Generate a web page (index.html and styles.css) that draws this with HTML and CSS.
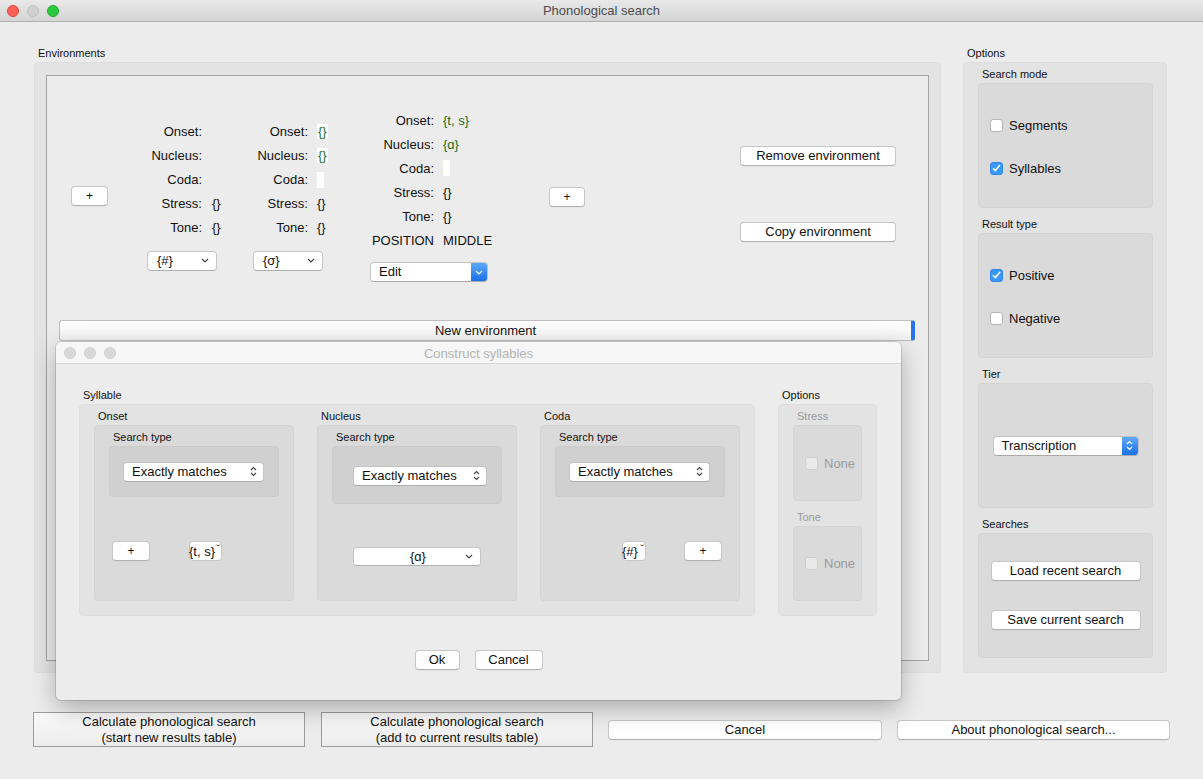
FILE: index.html
```html
<!DOCTYPE html>
<html>
<head>
<meta charset="utf-8">
<link rel="stylesheet" href="styles.css">
</head>
<body>
<div class="window">
  <div class="titlebar">
    <div class="lights">
      <span class="light red"></span><span class="light gray"></span><span class="light green"></span>
    </div>
    <div class="title">Phonological search</div>
  </div>

  <div class="main">
    <div class="envcol">
      <div class="glabel">Environments</div>
      <div class="group envgroup">
        <div class="scroll">
          <div class="envrow">
            <button class="btn plus plus1">+</button>
            <div class="col col1">
              <div class="grid g1">
                <span class="lbl">Onset:</span><span class="val"></span>
                <span class="lbl">Nucleus:</span><span class="val"></span>
                <span class="lbl">Coda:</span><span class="val"></span>
                <span class="lbl">Stress:</span><span class="val">{}</span>
                <span class="lbl">Tone:</span><span class="val">{}</span>
              </div>
              <div class="drop d70"><span>{#}</span><svg width="8" height="5" viewBox="0 0 8 5"><path d="M1 1l3 3 3-3" fill="none" stroke="#444" stroke-width="1.2"/></svg></div>
            </div>
            <div class="col col2">
              <div class="grid g1">
                <span class="lbl">Onset:</span><span class="val"><span class="wbox green">{}</span></span>
                <span class="lbl">Nucleus:</span><span class="val"><span class="wbox green">{}</span></span>
                <span class="lbl">Coda:</span><span class="val"><span class="wempty"></span></span>
                <span class="lbl">Stress:</span><span class="val">{}</span>
                <span class="lbl">Tone:</span><span class="val">{}</span>
              </div>
              <div class="drop d70"><span>{σ}</span><svg width="8" height="5" viewBox="0 0 8 5"><path d="M1 1l3 3 3-3" fill="none" stroke="#444" stroke-width="1.2"/></svg></div>
            </div>
            <div class="col col3">
              <div class="grid g3">
                <span class="lbl">Onset:</span><span class="val green">{t, s}</span>
                <span class="lbl">Nucleus:</span><span class="val green">{ɑ}</span>
                <span class="lbl">Coda:</span><span class="val"><span class="wempty"></span></span>
                <span class="lbl">Stress:</span><span class="val">{}</span>
                <span class="lbl">Tone:</span><span class="val">{}</span>
                <span class="lbl">POSITION</span><span class="val">MIDDLE</span>
              </div>
              <div class="combo-blue edit"><span class="ctext">Edit</span><span class="cblue"><svg width="8" height="5" viewBox="0 0 8 5"><path d="M1 1l3 3 3-3" fill="none" stroke="#fff" stroke-width="1.2"/></svg></span></div>
            </div>
            <button class="btn plus plus2">+</button>
            <div class="col rightbtns">
              <button class="btn wide">Remove environment</button>
              <button class="btn wide">Copy environment</button>
            </div>
          </div>
          <button class="newenv">New environment</button>
        </div>
      </div>
    </div>

    <div class="optcol">
      <div class="glabel">Options</div>
      <div class="group optgroup">
        <div class="sect">
          <div class="slabel">Search mode</div>
          <div class="sbox checks">
            <label class="chk"><span class="cb"></span>Segments</label>
            <label class="chk"><span class="cb on"><svg width="9" height="8" viewBox="0 0 9 8"><path d="M1 4.2l2.3 2.4L8 1" fill="none" stroke="#fff" stroke-width="1.5"/></svg></span>Syllables</label>
          </div>
        </div>
        <div class="sect">
          <div class="slabel">Result type</div>
          <div class="sbox checks">
            <label class="chk"><span class="cb on"><svg width="9" height="8" viewBox="0 0 9 8"><path d="M1 4.2l2.3 2.4L8 1" fill="none" stroke="#fff" stroke-width="1.5"/></svg></span>Positive</label>
            <label class="chk"><span class="cb"></span>Negative</label>
          </div>
        </div>
        <div class="sect">
          <div class="slabel">Tier</div>
          <div class="sbox center">
            <div class="combo-blue tier"><span class="ctext">Transcription</span><span class="cblue"><svg width="7" height="11" viewBox="0 0 7 11"><path d="M1 4l2.5-2.5L6 4M1 7l2.5 2.5L6 7" fill="none" stroke="#fff" stroke-width="1.2"/></svg></span></div>
          </div>
        </div>
        <div class="sect">
          <div class="slabel">Searches</div>
          <div class="sbox center searches">
            <button class="btn sbtn">Load recent search</button>
            <button class="btn sbtn">Save current search</button>
          </div>
        </div>
      </div>
    </div>
  </div>

  <div class="bottom">
    <button class="sqbtn">Calculate phonological search<br>(start new results table)</button>
    <button class="sqbtn">Calculate phonological search<br>(add to current results table)</button>
    <button class="btn bbtn">Cancel</button>
    <button class="btn bbtn">About phonological search...</button>
  </div>

  <div class="dialog">
    <div class="dtitlebar">
      <div class="lights dl">
        <span class="light dim"></span><span class="light dim"></span><span class="light dim"></span>
      </div>
      <div class="dtitle">Construct syllables</div>
    </div>
    <div class="dbody">
      <div class="drow">
        <div class="syl">
          <div class="glabel">Syllable</div>
          <div class="group sylgroup">
            <div class="part">
              <div class="slabel">Onset</div>
              <div class="sbox pbox">
                <div class="slabel">Search type</div>
                <div class="stbox">
                  <div class="combo ex"><span>Exactly matches</span><svg width="7" height="11" viewBox="0 0 7 11"><path d="M1 4l2.5-2.5L6 4M1 7l2.5 2.5L6 7" fill="none" stroke="#444" stroke-width="1.1"/></svg></div>
                </div>
                <div class="lower onset-lower">
                  <button class="btn plus pl">+</button>
                  <div class="mini ts"><span>{t, s}</span><i>ˇ</i></div>
                </div>
              </div>
            </div>
            <div class="part">
              <div class="slabel">Nucleus</div>
              <div class="sbox pbox">
                <div class="slabel">Search type</div>
                <div class="stbox tall">
                  <div class="combo ex"><span>Exactly matches</span><svg width="7" height="11" viewBox="0 0 7 11"><path d="M1 4l2.5-2.5L6 4M1 7l2.5 2.5L6 7" fill="none" stroke="#444" stroke-width="1.1"/></svg></div>
                </div>
                <div class="lower nuc-lower">
                  <div class="drop nucdrop"><span>{ɑ}</span><svg width="8" height="5" viewBox="0 0 8 5"><path d="M1 1l3 3 3-3" fill="none" stroke="#444" stroke-width="1.2"/></svg></div>
                </div>
              </div>
            </div>
            <div class="part">
              <div class="slabel">Coda</div>
              <div class="sbox pbox">
                <div class="slabel">Search type</div>
                <div class="stbox">
                  <div class="combo ex"><span>Exactly matches</span><svg width="7" height="11" viewBox="0 0 7 11"><path d="M1 4l2.5-2.5L6 4M1 7l2.5 2.5L6 7" fill="none" stroke="#444" stroke-width="1.1"/></svg></div>
                </div>
                <div class="lower coda-lower">
                  <div class="mini hash"><span>{#}</span><i>ˇ</i></div>
                  <button class="btn plus pr">+</button>
                </div>
              </div>
            </div>
          </div>
        </div>
        <div class="dopts">
          <div class="glabel">Options</div>
          <div class="group doptgroup">
            <div class="slabel dis">Stress</div>
            <div class="sbox obox"><label class="chk dis"><span class="cb dcb"></span>None</label></div>
            <div class="slabel dis">Tone</div>
            <div class="sbox obox"><label class="chk dis"><span class="cb dcb"></span>None</label></div>
          </div>
        </div>
      </div>
      <div class="dbtns">
        <button class="btn okb">Ok</button>
        <button class="btn cb2">Cancel</button>
      </div>
    </div>
  </div>
</div>
</body>
</html>
```

FILE: styles.css
```css
* { box-sizing: border-box; }
html, body { margin: 0; padding: 0; }
body {
  width: 1203px; height: 779px; overflow: hidden;
  background: #ececec;
  font-family: "Liberation Sans", Arial, sans-serif;
  font-size: 13px; color: #111;
}
.window { position: relative; width: 1203px; height: 779px; }

.titlebar {
  height: 22px; position: relative;
  background: linear-gradient(#e9e9e9, #d4d4d4);
  border-bottom: 1px solid #b1b1b1;
  display: flex; align-items: center; justify-content: center;
}
.lights { position: absolute; left: 7px; top: 5px; display: flex; gap: 8px; }
.light { width: 12px; height: 12px; border-radius: 50%; display: block; }
.light.red { background: #fc5f57; border: 1px solid #e0443e; }
.light.gray { background: #d0d0d0; border: 1px solid #c0c0c0; }
.light.green { background: #2ac940; border: 1px solid #1fa92f; }
.light.dim { background: #d9d9d9; border: 1px solid #cdcdcd; }
.title { color: #4c4c4c; font-size: 13px; }

.main { display: flex; padding: 24px 0 0 34px; gap: 22px; }
.glabel { font-size: 11px; line-height: 14px; height: 14px; padding-left: 4px; margin-bottom: 2px; color: #111; }
.group { background: #e3e3e3; border: 1px solid #dedede; border-radius: 4px; }
.envcol { width: 907px; }
.envgroup { height: 611px; padding: 12px 11px 11px 11px; }
.scroll { height: 586px; border: 1px solid #a3a3a3; background: #ececec; padding: 0 12px; }

.envrow { display: flex; align-items: center; padding-top: 32px; }
.col { display: flex; flex-direction: column; }
.btn {
  font-family: inherit; font-size: 13px; color: #111;
  background: #fff; border: 1px solid #c6c6c6; border-bottom-color: #b0b0b0;
  border-radius: 4px; height: 20px; padding: 0; line-height: 18px;
  box-shadow: 0 0.5px 0 rgba(0,0,0,0.05);
}
.plus { width: 36px; font-size: 12px; }
.plus1 { margin-left: 12px; margin-top: 2px; width: 37px; }
.col1 { margin-left: 39px; }
.col2 { margin-left: 25px; }
.col3 { margin-left: 37px; }
.plus2 { margin-left: 50px; margin-top: 4px; }
.rightbtns { margin-left: 155px; gap: 56px; margin-top: -2px; }
.wide { width: 156px; }

.grid { display: grid; grid-auto-rows: 24px; align-items: center; }
.g1 { grid-template-columns: 55px 16px; column-gap: 10px; }
.col2 .g1 { column-gap: 9px; }
.g3 { grid-template-columns: 64px 56px; column-gap: 9px; }
.lbl { text-align: right; white-space: nowrap; }
.val { white-space: nowrap; }
.green { color: #1e6e1e; }
.wbox { background: #fff; display: inline-block; line-height: 15px; padding: 0 1px; }
.wempty { background: #fff; display: inline-block; width: 7px; height: 16px; vertical-align: middle; }

.drop {
  height: 20px; background: #fff; border: 1px solid #c6c6c6; border-bottom-color: #b0b0b0;
  border-radius: 4px; display: flex; align-items: center; justify-content: space-between;
  padding: 0 7px 0 9px;
}
.d70 { width: 70px; margin-top: 11px; }
.combo-blue {
  height: 20px; display: flex; background: #fff; border: 1px solid #c3c3c3; border-bottom-color: #aaa;
  border-radius: 4px; overflow: hidden;
}
.combo-blue .ctext { flex: 1; padding-left: 8px; line-height: 18px; }
.combo-blue .cblue {
  width: 16px; background: linear-gradient(#5fa9fb, #1a6fea);
  display: flex; align-items: center; justify-content: center;
}
.edit { width: 118px; margin-top: 10px; }
.tier { width: 146px; }

.newenv {
  margin-top: 38px; width: 856px; height: 21px; padding: 0;
  font-family: inherit; font-size: 13px; color: #111;
  background: linear-gradient(#ffffff, #f1f1f1);
  border: 1px solid #bfbfbf; border-right: 4px solid #2a73ea; border-radius: 3px;
}

.optcol { width: 204px; }
.optgroup { height: 611px; padding: 4px 13px 0 14px; display: flex; flex-direction: column; gap: 9px; }
.slabel { font-size: 11px; line-height: 14px; height: 14px; padding-left: 4px; margin-bottom: 2px; }
.sbox { background: #dadada; border: 1px solid #d4d4d4; border-radius: 4px; }
.sect .sbox { height: 125px; }
.checks { display: flex; flex-direction: column; justify-content: center; gap: 27px; padding-left: 11px; padding-top: 2px; }
.chk { display: flex; align-items: center; gap: 6px; font-size: 13px; height: 16px; }
.cb { width: 13px; height: 13px; background: #fff; border: 1px solid #b5b5b5; border-radius: 3px; display: flex; align-items: center; justify-content: center; }
.cb.on { background: #3b99fc; border-color: #2f86e6; }
.center { display: flex; align-items: center; justify-content: center; }
.searches { flex-direction: column; gap: 29px; }
.sbtn { width: 150px; }

.bottom { display: flex; align-items: center; padding: 39px 0 0 33px; gap: 16px; }
.sqbtn {
  width: 272px; height: 35px; padding: 1px 0 0 0;
  font-family: inherit; font-size: 13px; line-height: 16px; color: #111;
  background: linear-gradient(#fafafa, #ececec);
  border: 1px solid #9d9d9d; border-radius: 0;
}
.bbtn { width: 274px; margin-left: -1px; margin-top: 1px; }
.bbtn + .bbtn { margin-left: -1px; width: 273px; }

.dialog {
  position: absolute; left: 56px; top: 342px; width: 845px; height: 358px;
  background: #ececec; border-radius: 5px;
  box-shadow: 0 8px 24px rgba(0,0,0,0.28), 0 0 0 1px rgba(0,0,0,0.12);
  overflow: hidden;
}
.dtitlebar {
  height: 22px; position: relative; background: #f6f6f6; border-bottom: 1px solid #d6d6d6;
  display: flex; align-items: center; justify-content: center; padding-top: 1px;
}
.dl { left: 8px; top: 5px; }
.dtitle { color: #b3b3b3; font-size: 13px; }
.dbody { padding: 24px 24px 0 23px; }
.drow { display: flex; gap: 23px; }
.syl { width: 676px; }
.sylgroup { height: 212px; display: flex; gap: 23px; padding: 4px 14px 0 14px; }
.part { width: 200px; }
.pbox { height: 176px; padding: 4px 14px 0 14px; }
.stbox { background: #d0d0d0; border: 1px solid #cbcbcb; border-radius: 4px; height: 51px; display: flex; align-items: center; padding-left: 13px; }
.stbox.tall { height: 58px; padding-top: 1px; padding-left: 20px; }
.combo {
  height: 20px; background: #fff; border: 1px solid #c3c3c3; border-bottom-color: #aaa; border-radius: 4px;
  display: flex; align-items: center; justify-content: space-between; padding: 0 6px 0 8px;
}
.ex { width: 141px; }
.stbox.tall .ex { width: 134px; }
.lower { display: flex; align-items: center; }
.onset-lower { margin-top: 44px; padding-left: 3px; gap: 39px; }
.pl { width: 38px; }
.mini {
  height: 20px; background: #fff; border: 1px solid #c6c6c6; border-radius: 4px;
  position: relative; display: flex; align-items: center;
}
.mini span { position: absolute; left: -1px; white-space: nowrap; }
.mini i { position: absolute; right: 1px; top: 1px; font-style: normal; font-size: 11px; }
.ts { width: 33px; }
.nuc-lower { margin-top: 43px; padding-left: 21px; }
.nucdrop { width: 128px; height: 19px; justify-content: center; position: relative; }
.nucdrop svg { position: absolute; right: 7px; top: 6px; }
.coda-lower { margin-top: 44px; padding-left: 67px; gap: 38px; }
.hash { width: 24px; }
.pr { width: 38px; }

.dopts { width: 99px; }
.doptgroup { height: 212px; padding: 4px 14px 0 14px; }
.dis { color: #9a9a9a; }
.obox { height: 76px; display: flex; align-items: center; padding-left: 11px; margin-bottom: 9px; }
.obox:last-child { height: 75px; margin-bottom: 0; }
.dcb { background: #e9e9e9; border-color: #cfcfcf; }
.dbtns { display: flex; justify-content: center; gap: 15px; margin-top: 34px; padding-left: 1px; }
.okb { width: 45px; }
.cb2 { width: 68px; }
```
